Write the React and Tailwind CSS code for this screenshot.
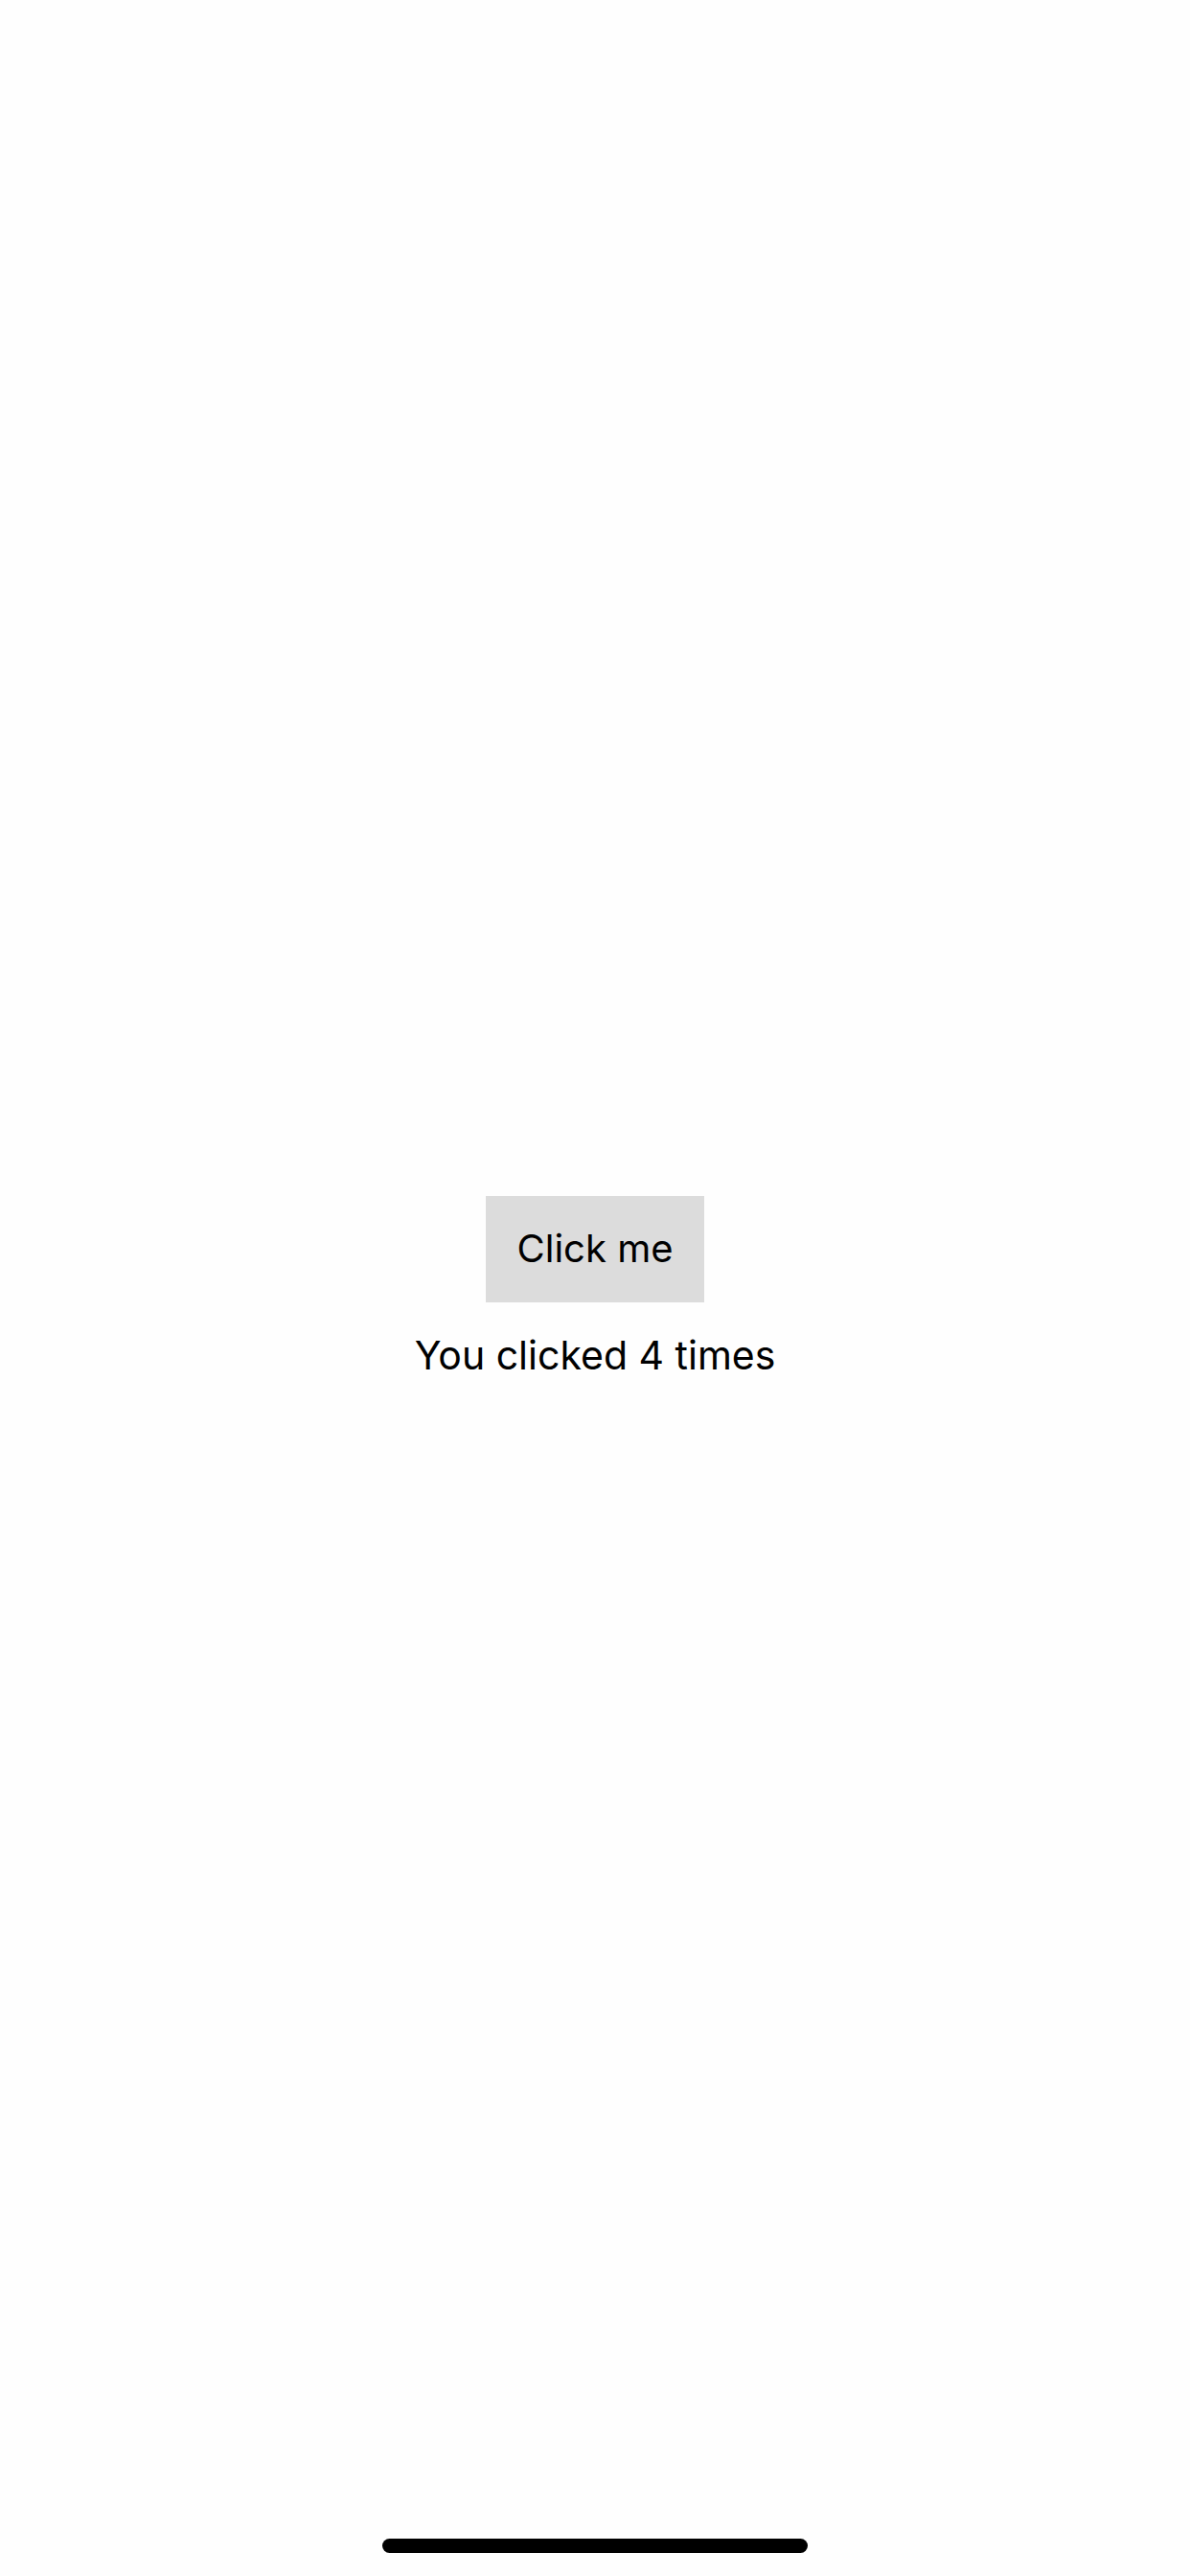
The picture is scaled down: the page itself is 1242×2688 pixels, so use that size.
import React from "react";

export default function App() {
  return (
    <div className="relative w-full h-[2688px] bg-[#fefefe] flex flex-col items-center justify-center pb-[3px]" style={{ fontFamily: "Inter, 'Noto Sans', sans-serif" }}>
      <button className="bg-[#dcdcdc] w-[228px] h-[111px] flex items-center justify-center text-[40px] text-black leading-none">
        Click me
      </button>
      <p className="mt-[31px] text-[41px] leading-[48px] text-black">You clicked 4 times</p>
      <div className="absolute bottom-[24px] left-1/2 -translate-x-1/2 w-[444px] h-[15px] rounded-full bg-black" />
    </div>
  );
}
